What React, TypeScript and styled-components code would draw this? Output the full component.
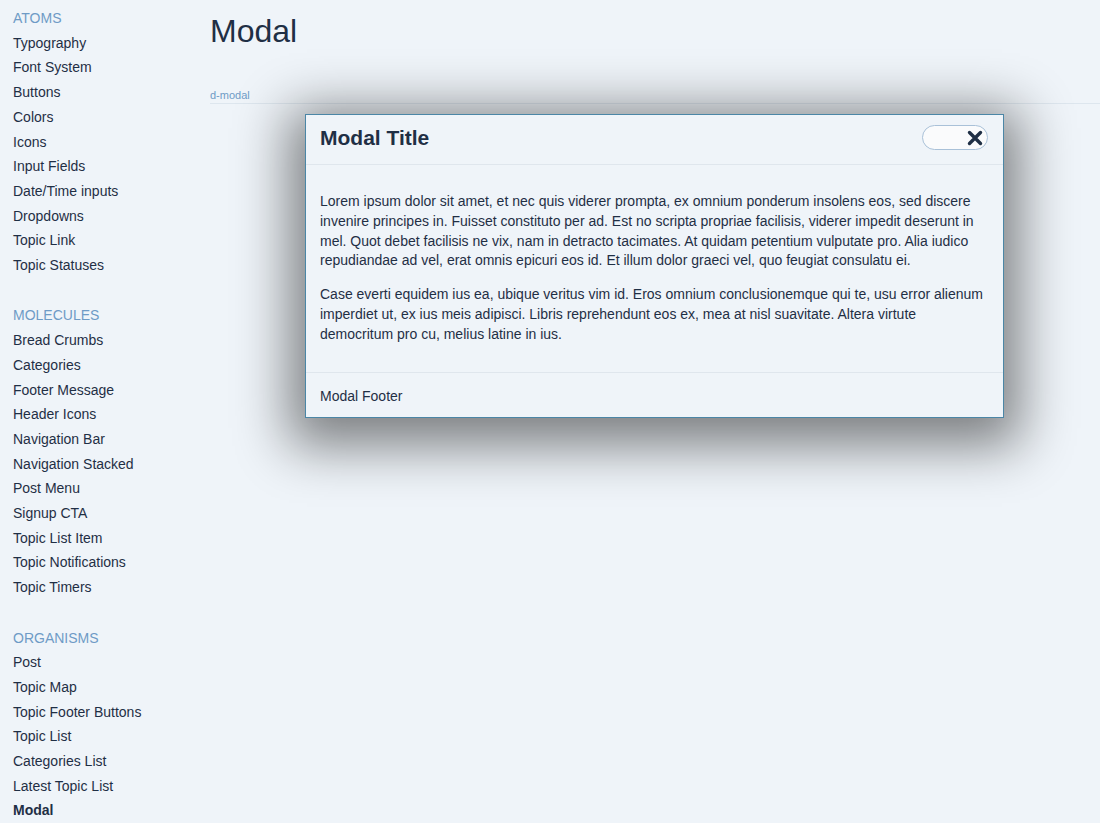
import React from "react";
import styled, { createGlobalStyle } from "styled-components";

const Global = createGlobalStyle`
  html, body { margin: 0; padding: 0; background: #eff4f9; }
  body { font-family: "Liberation Sans", Arial, sans-serif; color: #1f2f45; }
  * { box-sizing: border-box; }
`;

const Page = styled.div`
  display: flex;
  min-height: 823px;
  background: #eff4f9;
`;

const Sidebar = styled.nav`
  width: 210px;
  flex: none;
  padding: 9px 0 0 13px;
`;

const Section = styled.div`
  margin-bottom: 28.7px;
`;

const SectionTitle = styled.div`
  font-size: 14px;
  line-height: 18px;
  height: 18px;
  margin-bottom: 3.7px;
  color: #6e9bc6;
  text-transform: uppercase;
`;

const Item = styled.div<{ $active?: boolean }>`
  font-size: 14px;
  line-height: 24.7px;
  color: #1f2f45;
  font-weight: ${(p) => (p.$active ? 700 : 400)};
`;

const Main = styled.main`
  flex: 1;
  padding-top: 12px;
`;

const Title = styled.h1`
  margin: 0;
  font-size: 32px;
  font-weight: 400;
  line-height: 38px;
  color: #1f2f45;
`;

const Label = styled.div`
  margin-top: 38px;
  font-size: 11px;
  line-height: 14px;
  color: #6e9bc6;
  padding-bottom: 1px;
  border-bottom: 1px solid #dde6ee;
`;

const Stage = styled.div`
  padding: 10px 0 0 95px;
`;

const Modal = styled.div`
  width: 699px;
  background: #eff4f9;
  border: 1px solid #4b86a6;
  box-shadow: 0 12px 50px 16px rgba(0, 0, 0, 0.48);
`;

const Header = styled.div`
  display: flex;
  align-items: center;
  justify-content: space-between;
  height: 50px;
  padding: 0 14px 0 14px;
  border-bottom: 1px solid #dfe6ed;
`;

const ModalTitle = styled.h2`
  margin: -4px 0 0 0;
  font-size: 21px;
  font-weight: 700;
  color: #1f2f45;
`;

const Close = styled.button`
  width: 66px;
  height: 25px;
  border-radius: 13px;
  border: 1px solid #a9c1d8;
  background: #fafbfc;
  display: flex;
  align-items: center;
  justify-content: flex-end;
  padding: 0 4px 0 0;
  margin-top: -4px;
  margin-right: 1px;
`;

const Body = styled.div`
  padding: 27px 14px 13px 14px;
  border-bottom: 1px solid #dfe6ed;
`;

const P = styled.p`
  margin: 0 0 14px 0;
  font-size: 14px;
  line-height: 19.8px;
  color: #1f2f45;
`;

const Footer = styled.div`
  font-size: 14px;
  line-height: 20px;
  padding: 13px 14px 11px 14px;
  color: #1f2f45;
`;

const atoms = ["Typography", "Font System", "Buttons", "Colors", "Icons", "Input Fields", "Date/Time inputs", "Dropdowns", "Topic Link", "Topic Statuses"];
const molecules = ["Bread Crumbs", "Categories", "Footer Message", "Header Icons", "Navigation Bar", "Navigation Stacked", "Post Menu", "Signup CTA", "Topic List Item", "Topic Notifications", "Topic Timers"];
const organisms = ["Post", "Topic Map", "Topic Footer Buttons", "Topic List", "Categories List", "Latest Topic List", "Modal"];

export default function App() {
  return (
    <>
      <Global />
      <Page>
        <Sidebar>
          <Section>
            <SectionTitle>Atoms</SectionTitle>
            {atoms.map((a) => <Item key={a}>{a}</Item>)}
          </Section>
          <Section>
            <SectionTitle>Molecules</SectionTitle>
            {molecules.map((a) => <Item key={a}>{a}</Item>)}
          </Section>
          <Section>
            <SectionTitle>Organisms</SectionTitle>
            {organisms.map((a) => <Item key={a} $active={a === "Modal"}>{a}</Item>)}
          </Section>
        </Sidebar>
        <Main>
          <Title>Modal</Title>
          <Label>d-modal</Label>
          <Stage>
            <Modal>
              <Header>
                <ModalTitle>Modal Title</ModalTitle>
                <Close aria-label="close">
                  <svg width="16" height="16" viewBox="0 0 16 16">
                    <path d="M2.5 2.5 L13.5 13.5 M13.5 2.5 L2.5 13.5" stroke="#1f2f45" strokeWidth="3.4" strokeLinecap="round" />
                  </svg>
                </Close>
              </Header>
              <Body>
                <P>Lorem ipsum dolor sit amet, et nec quis viderer prompta, ex omnium ponderum insolens eos, sed discere invenire principes in. Fuisset constituto per ad. Est no scripta propriae facilisis, viderer impedit deserunt in mel. Quot debet facilisis ne vix, nam in detracto tacimates. At quidam petentium vulputate pro. Alia iudico repudiandae ad vel, erat omnis epicuri eos id. Et illum dolor graeci vel, quo feugiat consulatu ei.</P>
                <P>Case everti equidem ius ea, ubique veritus vim id. Eros omnium conclusionemque qui te, usu error alienum imperdiet ut, ex ius meis adipisci. Libris reprehendunt eos ex, mea at nisl suavitate. Altera virtute democritum pro cu, melius latine in ius.</P>
              </Body>
              <Footer>Modal Footer</Footer>
            </Modal>
          </Stage>
        </Main>
      </Page>
    </>
  );
}
